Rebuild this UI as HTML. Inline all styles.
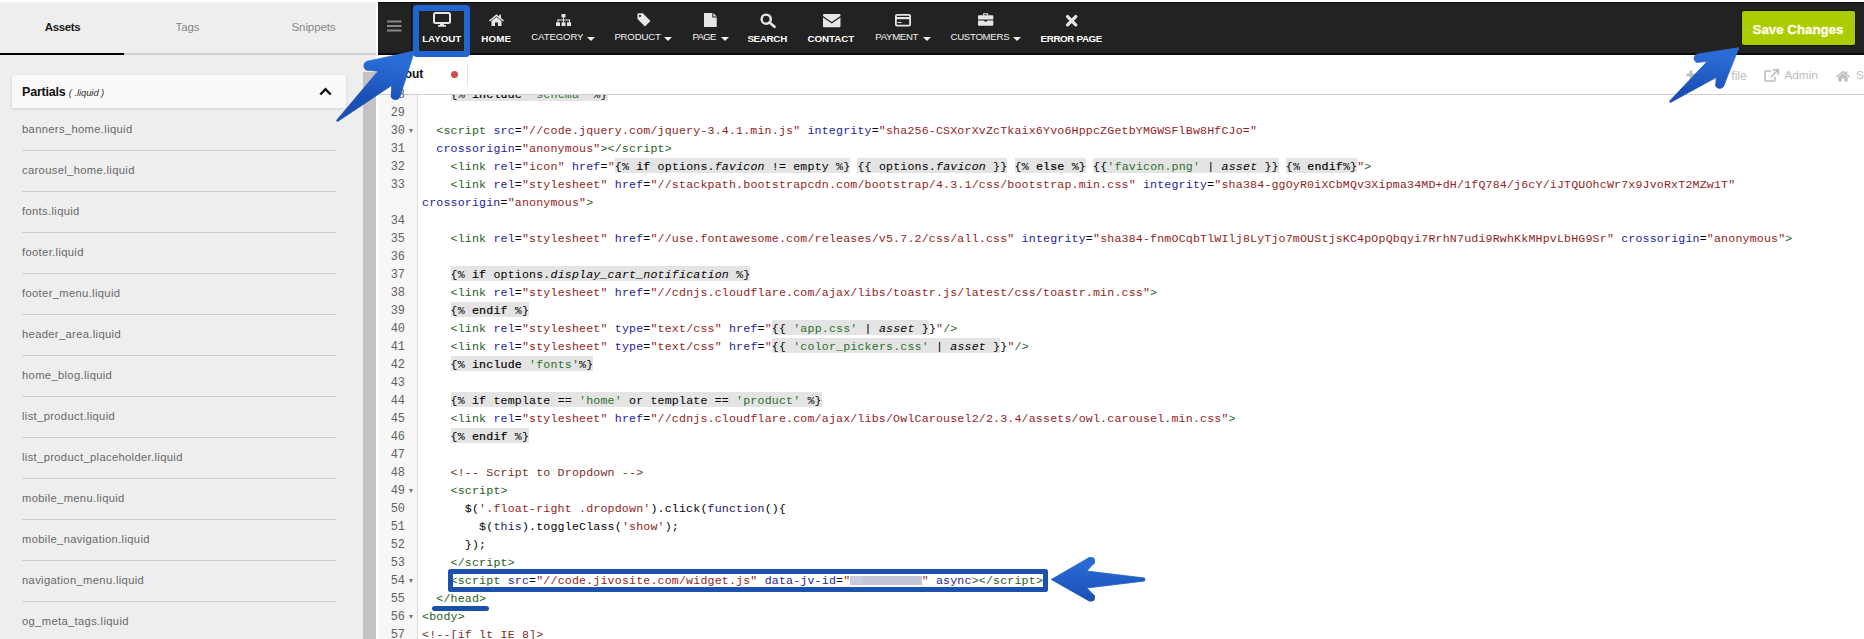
<!DOCTYPE html>
<html><head><meta charset="utf-8">
<style>
*{box-sizing:border-box;margin:0;padding:0}
html,body{width:1864px;height:639px;overflow:hidden;background:#fff;position:relative;font-family:"Liberation Sans",sans-serif}
.abs{position:absolute}
#side{position:absolute;left:0;top:2px;width:376px;height:637px;background:#eeeeee}
.tab{position:absolute;top:0;height:51px;width:125px;text-align:center;font-size:11.5px;line-height:51px;color:#888;letter-spacing:-0.1px}
.tab.on{color:#1a1a1a;font-weight:bold;letter-spacing:-0.35px}
#uline-b{position:absolute;left:0;top:51px;width:124px;height:2px;background:#000}
#uline-g{position:absolute;left:124px;top:51px;width:252px;height:2px;background:#d2d2d2}
#card{position:absolute;left:12px;top:73px;width:334px;height:33px;background:#f9f9f9;box-shadow:0 1px 3px rgba(0,0,0,.13)}
#card .t{position:absolute;left:10px;top:1px;line-height:33px;font-size:12.5px;font-weight:bold;color:#111;letter-spacing:-0.2px}
#card .t i{font-weight:normal;font-size:9.5px;color:#333;letter-spacing:-0.1px}
#card .chev{position:absolute;left:308px;top:13px;width:10px;height:10px}
.item{position:absolute;left:22px;font-size:11.8px;color:#707070;height:41px;width:314px}
.item span{position:absolute;left:0;top:0}
.sep{position:absolute;left:22px;width:314px;height:1px;background:#cdcdcd}
#sb{position:absolute;left:363px;top:70px;width:13px;height:569px;background:#c3c3c3}

#nav{position:absolute;left:378px;top:2px;width:1486px;height:53px;background:#222;border-top:1.5px solid #0b0b0b;border-bottom:2px solid #0b0b0b}
.ni{position:absolute;color:#fff;white-space:nowrap}
.nb{font-weight:bold;font-size:9.6px;letter-spacing:-0.1px}
.nr{font-weight:normal;font-size:9.4px;color:#f2f2f2;letter-spacing:-0.15px}
.caret{display:inline-block;width:0;height:0;border-left:4px solid transparent;border-right:4px solid transparent;border-top:4px solid #f0f0f0;margin-left:3px;vertical-align:1px}
#save{position:absolute;left:1362.5px;top:6.8px;width:115px;height:36.5px;background:#abcc00;border:1px solid #151515;border-radius:3px;color:#fffbe6;font-weight:bold;font-size:13.3px;text-align:center;line-height:38px;letter-spacing:0px;-webkit-text-stroke:0.35px #fffbe6}

#tabbar{position:absolute;left:376px;top:55px;width:1488px;height:40px;background:#fff;border-bottom:1px solid #cfcfcf}
#gutter{position:absolute;left:377.5px;top:95px;width:40.5px;height:544px;background:#f7f7f7;border-right:1px solid #dddddd}
#code{position:absolute;left:376px;top:95px;width:1488px;height:544px;overflow:hidden}
.gn{position:absolute;left:-1.5px;width:29px;text-align:right;font-family:"Liberation Mono",monospace;font-size:11.9px;line-height:18px;color:#626262;height:18px}
.fold{position:absolute;left:32.5px;top:6.8px;width:0;height:0;border-left:2.8px solid transparent;border-right:2.8px solid transparent;border-top:4px solid #777}
.ln{position:absolute;left:46px;white-space:pre;font-family:"Liberation Mono",monospace;font-size:11.6px;letter-spacing:0.18px;line-height:18px;color:#000;height:18px}
.t{color:#1d5e1d}
.a{color:#22229a}
.s{color:#931d1d}
.c{color:#7a2e1e}
.g{color:#2d6f2d}
.k{color:#1a1a66}
.b{-webkit-text-stroke:0.2px #000}
.i{font-style:italic}
.lq{background:#e4e4e4;padding:2px 0 0}
.r{color:transparent;display:inline-block;height:9px;line-height:9px;vertical-align:0.5px;background:linear-gradient(90deg,#c9ccdc 0,#c9ccdc 12px,#c3c5d8 12px)}
svg{position:absolute;overflow:visible}
</style></head><body>
<div id="side">
  <div class="tab on" style="left:0">Assets</div>
  <div class="tab" style="left:125px">Tags</div>
  <div class="tab" style="left:251px">Snippets</div>
  <div id="uline-b"></div><div id="uline-g"></div>
  <div id="card"><div class="t">Partials <i>( .liquid )</i></div>
    <svg class="chev" viewBox="0 0 13 9" style="left:307px;top:11.5px;width:13px;height:9px"><path d="M1.3 7.5 L6.5 2.2 L11.7 7.5" fill="none" stroke="#111" stroke-width="2.4"/></svg>
  </div>
  <div class="abs" style="left:22px;top:122.32px;font-size:11.2px;line-height:1;letter-spacing:0.35px;color:#686868;white-space:nowrap">banners_home.liquid</div>
<div class="sep" style="top:148px"></div>
<div class="abs" style="left:22px;top:163.32px;font-size:11.2px;line-height:1;letter-spacing:0.35px;color:#686868;white-space:nowrap">carousel_home.liquid</div>
<div class="sep" style="top:189px"></div>
<div class="abs" style="left:22px;top:204.32px;font-size:11.2px;line-height:1;letter-spacing:0.35px;color:#686868;white-space:nowrap">fonts.liquid</div>
<div class="sep" style="top:230px"></div>
<div class="abs" style="left:22px;top:245.32px;font-size:11.2px;line-height:1;letter-spacing:0.35px;color:#686868;white-space:nowrap">footer.liquid</div>
<div class="sep" style="top:271px"></div>
<div class="abs" style="left:22px;top:286.32px;font-size:11.2px;line-height:1;letter-spacing:0.35px;color:#686868;white-space:nowrap">footer_menu.liquid</div>
<div class="sep" style="top:312px"></div>
<div class="abs" style="left:22px;top:327.32px;font-size:11.2px;line-height:1;letter-spacing:0.35px;color:#686868;white-space:nowrap">header_area.liquid</div>
<div class="sep" style="top:353px"></div>
<div class="abs" style="left:22px;top:368.32px;font-size:11.2px;line-height:1;letter-spacing:0.35px;color:#686868;white-space:nowrap">home_blog.liquid</div>
<div class="sep" style="top:394px"></div>
<div class="abs" style="left:22px;top:409.32px;font-size:11.2px;line-height:1;letter-spacing:0.35px;color:#686868;white-space:nowrap">list_product.liquid</div>
<div class="sep" style="top:435px"></div>
<div class="abs" style="left:22px;top:450.32px;font-size:11.2px;line-height:1;letter-spacing:0.35px;color:#686868;white-space:nowrap">list_product_placeholder.liquid</div>
<div class="sep" style="top:476px"></div>
<div class="abs" style="left:22px;top:491.32px;font-size:11.2px;line-height:1;letter-spacing:0.35px;color:#686868;white-space:nowrap">mobile_menu.liquid</div>
<div class="sep" style="top:517px"></div>
<div class="abs" style="left:22px;top:532.32px;font-size:11.2px;line-height:1;letter-spacing:0.35px;color:#686868;white-space:nowrap">mobile_navigation.liquid</div>
<div class="sep" style="top:558px"></div>
<div class="abs" style="left:22px;top:573.32px;font-size:11.2px;line-height:1;letter-spacing:0.35px;color:#686868;white-space:nowrap">navigation_menu.liquid</div>
<div class="sep" style="top:599px"></div>
<div class="abs" style="left:22px;top:614.32px;font-size:11.2px;line-height:1;letter-spacing:0.35px;color:#686868;white-space:nowrap">og_meta_tags.liquid</div>
<div class="sep" style="top:640px"></div>
  <div id="sb"></div>
</div>

<div id="nav">
  
  <div id="save">Save Changes</div>
</div>

<div id="tabbar">
  <div class="abs" style="left:8px;top:0;line-height:38px;font-size:12px;font-weight:bold;color:#111">Layout</div>
  <div class="abs" style="left:75px;top:16px;width:7px;height:7px;border-radius:50%;background:#cf4f4f"></div>
  <div class="abs" style="left:91px;top:8px;width:1px;height:23px;background:#e3e3e3"></div>
  <div class="abs" style="left:1327.5px;top:14.67px;font-size:12.2px;line-height:1;color:#bdbdbd;white-space:nowrap">New file</div>
<svg style="left:1310.0px;top:15.0px;width:10px;height:10px" viewBox="0 0 10 10"><path d="M5 0.5 L5 9.5 M0.5 5 L9.5 5" stroke="#bdbdbd" stroke-width="2.6"/></svg>
<svg style="left:1388.0px;top:14.0px;width:15px;height:13px" viewBox="0 0 15 13"><path d="M7 2 L2 2 Q1 2 1 3 L1 11 Q1 12 2 12 L10 12 Q11 12 11 11 L11 7.5" fill="none" stroke="#bdbdbd" stroke-width="1.6"/><path d="M9 0.8 L14.2 0.8 L14.2 6 M14 1 L7 8" fill="none" stroke="#bdbdbd" stroke-width="1.7"/></svg>
<div class="abs" style="left:1408.4px;top:15.01px;font-size:11.8px;line-height:1;color:#bdbdbd;white-space:nowrap">Admin</div>
<svg style="left:1460.4px;top:14.5px;width:14px;height:12px" viewBox="0 0 15 12"><path d="M7.5 0.3 L0 6.5 L1 7.5 L7.5 2.2 L14 7.5 L15 6.5 L12 4 L12 0.8 L10.3 0.8 L10.3 2.6 Z" fill="#bdbdbd"/><path d="M2.5 7 L7.5 3 L12.5 7 L12.5 12 L9 12 L9 8.5 L6 8.5 L6 12 L2.5 12 Z" fill="#bdbdbd"/></svg>
<div class="abs" style="left:1480.0px;top:15.01px;font-size:11.8px;line-height:1;color:#bdbdbd;white-space:nowrap">Store</div>
</div>

<div id="gutter">
<div class="gn" style="top:-9.0px">28</div>
<div class="gn" style="top:9.0px">29</div>
<div class="gn" style="top:27.0px">30<i class="fold"></i></div>
<div class="gn" style="top:45.0px">31</div>
<div class="gn" style="top:63.0px">32</div>
<div class="gn" style="top:81.0px">33</div>
<div class="gn" style="top:117.0px">34</div>
<div class="gn" style="top:135.0px">35</div>
<div class="gn" style="top:153.0px">36</div>
<div class="gn" style="top:171.0px">37</div>
<div class="gn" style="top:189.0px">38</div>
<div class="gn" style="top:207.0px">39</div>
<div class="gn" style="top:225.0px">40</div>
<div class="gn" style="top:243.0px">41</div>
<div class="gn" style="top:261.0px">42</div>
<div class="gn" style="top:279.0px">43</div>
<div class="gn" style="top:297.0px">44</div>
<div class="gn" style="top:315.0px">45</div>
<div class="gn" style="top:333.0px">46</div>
<div class="gn" style="top:351.0px">47</div>
<div class="gn" style="top:369.0px">48</div>
<div class="gn" style="top:387.0px">49<i class="fold"></i></div>
<div class="gn" style="top:405.0px">50</div>
<div class="gn" style="top:423.0px">51</div>
<div class="gn" style="top:441.0px">52</div>
<div class="gn" style="top:459.0px">53</div>
<div class="gn" style="top:477.0px">54<i class="fold"></i></div>
<div class="gn" style="top:495.0px">55</div>
<div class="gn" style="top:513.0px">56<i class="fold"></i></div>
<div class="gn" style="top:531.0px">57</div>
</div>
<div id="code">
<div class="ln" style="top:-9.0px">    <span class="lq">{% <span class="b">include</span> <span class="g">&#x27;schema&#x27;</span> %}</span></div>
<div class="ln" style="top:9.0px"></div>
<div class="ln" style="top:27.0px">  <span class="t">&lt;script</span> <span class="a">src</span>=<span class="s">&quot;//code.jquery.com/jquery-3.4.1.min.js&quot;</span> <span class="a">integrity</span>=<span class="s">&quot;sha256-CSXorXvZcTkaix6Yvo6HppcZGetbYMGWSFlBw8HfCJo=&quot;</span></div>
<div class="ln" style="top:45.0px">  <span class="a">crossorigin</span>=<span class="s">&quot;anonymous&quot;</span><span class="t">&gt;&lt;/script&gt;</span></div>
<div class="ln" style="top:63.0px">    <span class="t">&lt;link</span> <span class="a">rel</span>=<span class="s">&quot;icon&quot;</span> <span class="a">href</span>=<span class="s">&quot;</span><span class="lq">{% <span class="b">if</span> options.<span class="i">favicon</span> != empty %}</span> <span class="lq">{{ options.<span class="i">favicon</span> }}</span> <span class="lq">{% <span class="b">else</span> %}</span> <span class="lq">{{<span class="g">&#x27;favicon.png&#x27;</span> | <span class="i">asset</span> }}</span> <span class="lq">{% <span class="b">endif</span>%}</span><span class="s">&quot;</span><span class="t">&gt;</span></div>
<div class="ln" style="top:81.0px">    <span class="t">&lt;link</span> <span class="a">rel</span>=<span class="s">&quot;stylesheet&quot;</span> <span class="a">href</span>=<span class="s">&quot;//stackpath.bootstrapcdn.com/bootstrap/4.3.1/css/bootstrap.min.css&quot;</span> <span class="a">integrity</span>=<span class="s">&quot;sha384-ggOyR0iXCbMQv3Xipma34MD+dH/1fQ784/j6cY/iJTQUOhcWr7x9JvoRxT2MZw1T&quot;</span></div>
<div class="ln" style="top:99.0px"><span class="a">crossorigin</span>=<span class="s">&quot;anonymous&quot;</span><span class="t">&gt;</span></div>
<div class="ln" style="top:117.0px"></div>
<div class="ln" style="top:135.0px">    <span class="t">&lt;link</span> <span class="a">rel</span>=<span class="s">&quot;stylesheet&quot;</span> <span class="a">href</span>=<span class="s">&quot;//use.fontawesome.com/releases/v5.7.2/css/all.css&quot;</span> <span class="a">integrity</span>=<span class="s">&quot;sha384-fnmOCqbTlWIlj8LyTjo7mOUStjsKC4pOpQbqyi7RrhN7udi9RwhKkMHpvLbHG9Sr&quot;</span> <span class="a">crossorigin</span>=<span class="s">&quot;anonymous&quot;</span><span class="t">&gt;</span></div>
<div class="ln" style="top:153.0px"></div>
<div class="ln" style="top:171.0px">    <span class="lq">{% <span class="b">if</span> options.<span class="i">display_cart_notification</span> %}</span></div>
<div class="ln" style="top:189.0px">    <span class="t">&lt;link</span> <span class="a">rel</span>=<span class="s">&quot;stylesheet&quot;</span> <span class="a">href</span>=<span class="s">&quot;//cdnjs.cloudflare.com/ajax/libs/toastr.js/latest/css/toastr.min.css&quot;</span><span class="t">&gt;</span></div>
<div class="ln" style="top:207.0px">    <span class="lq">{% <span class="b">endif</span> %}</span></div>
<div class="ln" style="top:225.0px">    <span class="t">&lt;link</span> <span class="a">rel</span>=<span class="s">&quot;stylesheet&quot;</span> <span class="a">type</span>=<span class="s">&quot;text/css&quot;</span> <span class="a">href</span>=<span class="s">&quot;</span><span class="lq">{{ <span class="g">&#x27;app.css&#x27;</span> | <span class="i">asset</span> }</span>}<span class="s">&quot;</span><span class="t">/&gt;</span></div>
<div class="ln" style="top:243.0px">    <span class="t">&lt;link</span> <span class="a">rel</span>=<span class="s">&quot;stylesheet&quot;</span> <span class="a">type</span>=<span class="s">&quot;text/css&quot;</span> <span class="a">href</span>=<span class="s">&quot;</span><span class="lq">{{ <span class="g">&#x27;color_pickers.css&#x27;</span> | <span class="i">asset</span> }</span>}<span class="s">&quot;</span><span class="t">/&gt;</span></div>
<div class="ln" style="top:261.0px">    <span class="lq">{% <span class="b">include</span> <span class="g">&#x27;fonts&#x27;</span>%}</span></div>
<div class="ln" style="top:279.0px"></div>
<div class="ln" style="top:297.0px">    <span class="lq">{% <span class="b">if</span> template == <span class="g">&#x27;home&#x27;</span> or template == <span class="g">&#x27;product&#x27;</span> %}</span></div>
<div class="ln" style="top:315.0px">    <span class="t">&lt;link</span> <span class="a">rel</span>=<span class="s">&quot;stylesheet&quot;</span> <span class="a">href</span>=<span class="s">&quot;//cdnjs.cloudflare.com/ajax/libs/OwlCarousel2/2.3.4/assets/owl.carousel.min.css&quot;</span><span class="t">&gt;</span></div>
<div class="ln" style="top:333.0px">    <span class="lq">{% <span class="b">endif</span> %}</span></div>
<div class="ln" style="top:351.0px"></div>
<div class="ln" style="top:369.0px">    <span class="c">&lt;!-- Script to Dropdown --&gt;</span></div>
<div class="ln" style="top:387.0px">    <span class="t">&lt;script&gt;</span></div>
<div class="ln" style="top:405.0px">      $(<span class="s">&#x27;.float-right .dropdown&#x27;</span>).click(<span class="k">function</span>(){</div>
<div class="ln" style="top:423.0px">        $(<span class="k">this</span>).toggleClass(<span class="s">&#x27;show&#x27;</span>);</div>
<div class="ln" style="top:441.0px">      });</div>
<div class="ln" style="top:459.0px">    <span class="t">&lt;/script&gt;</span></div>
<div class="ln" style="top:477.0px">    <span class="t">&lt;script</span> <span class="a">src</span>=<span class="s">&quot;//code.jivosite.com/widget.js&quot;</span> <span class="a">data-jv-id</span>=<span class="s">&quot;</span><span class="r">XXXXXXXXXX</span><span class="s">&quot;</span> <span class="a">async</span><span class="t">&gt;&lt;/script&gt;</span></div>
<div class="ln" style="top:495.0px">  <span class="t">&lt;/head&gt;</span></div>
<div class="ln" style="top:513.0px"><span class="t">&lt;body&gt;</span></div>
<div class="ln" style="top:531.0px"><span class="c">&lt;!--[if lt IE 8]&gt;</span></div>
</div>

<svg style="left:387px;top:20px;width:15px;height:12px" viewBox="0 0 15 12"><rect x="0" y="0.5" width="14.5" height="2" fill="#8a8a8a"/><rect x="0" y="5" width="14.5" height="2" fill="#8a8a8a"/><rect x="0" y="9.5" width="14.5" height="2" fill="#8a8a8a"/></svg>
<div class="abs" style="left:411px;top:3px;width:1px;height:50px;background:#111"></div>
<svg style="left:433px;top:11.7px;width:18px;height:15px" viewBox="0 0 18 15"><rect x="1" y="1" width="16" height="10" rx="1.5" fill="none" stroke="#e6e6e6" stroke-width="2"/><rect x="7" y="11" width="4" height="2.5" fill="#e6e6e6"/><rect x="5" y="13" width="8" height="1.8" rx="0.5" fill="#e6e6e6"/></svg>
<svg style="left:488.8px;top:14px;width:15px;height:12px" viewBox="0 0 15 12"><path d="M7.5 0.3 L0 6.5 L1 7.5 L7.5 2.2 L14 7.5 L15 6.5 L12 4 L12 0.8 L10.3 0.8 L10.3 2.6 Z" fill="#e6e6e6"/><path d="M2.5 7 L7.5 3 L12.5 7 L12.5 12 L9 12 L9 8.5 L6 8.5 L6 12 L2.5 12 Z" fill="#e6e6e6"/></svg>
<svg style="left:555.7px;top:14px;width:15px;height:12px" viewBox="0 0 15 12"><rect x="5.5" y="0" width="4" height="3.5" fill="#e6e6e6"/><rect x="7" y="3.5" width="1" height="2.5" fill="#e6e6e6"/><rect x="1.5" y="5.5" width="12" height="1" fill="#e6e6e6"/><rect x="1.5" y="5.5" width="1" height="3" fill="#e6e6e6"/><rect x="13" y="5.5" width="1" height="3" fill="#e6e6e6"/><rect x="7" y="5.5" width="1" height="3" fill="#e6e6e6"/><rect x="0" y="8.3" width="4" height="3.7" fill="#e6e6e6"/><rect x="5.5" y="8.3" width="4" height="3.7" fill="#e6e6e6"/><rect x="11" y="8.3" width="4" height="3.7" fill="#e6e6e6"/></svg>
<svg style="left:636.8px;top:13.1px;width:13.5px;height:13.5px" viewBox="0 0 13.5 13.5"><path d="M0.5 1.5 Q0.5 0.3 1.7 0.3 L5.8 0.3 L13 7.5 Q13.4 8 13 8.5 L8.5 13 Q8 13.4 7.5 13 L0.5 6 Z" fill="#e6e6e6"/><circle cx="3" cy="2.9" r="1.1" fill="#222"/></svg>
<svg style="left:703.9px;top:13px;width:13px;height:14px" viewBox="0 0 13 14"><path d="M0 0 L8.3 0 L8.3 4.5 L12.7 4.5 L12.7 14 L0 14 Z" fill="#e6e6e6"/><path d="M9.3 0 L12.7 3.5 L9.3 3.5 Z" fill="#e6e6e6"/></svg>
<svg style="left:759.7px;top:13px;width:16px;height:15px" viewBox="0 0 16 15"><circle cx="6.2" cy="6.2" r="4.6" fill="none" stroke="#e6e6e6" stroke-width="2.4"/><path d="M9.6 9.6 L14.5 13.8" stroke="#e6e6e6" stroke-width="2.6" stroke-linecap="round"/></svg>
<svg style="left:822.8px;top:14px;width:17.5px;height:13.2px" viewBox="0 0 17.5 13.2"><path d="M0 1 Q0 0 1 0 L16.5 0 Q17.5 0 17.5 1 L17.5 2 L8.75 8 L0 2 Z" fill="#e6e6e6"/><path d="M0 3.6 L8.75 9.6 L17.5 3.6 L17.5 12.2 Q17.5 13.2 16.5 13.2 L1 13.2 Q0 13.2 0 12.2 Z" fill="#e6e6e6"/></svg>
<svg style="left:894.9px;top:13.6px;width:16px;height:12.5px" viewBox="0 0 16 12.5"><rect x="0.9" y="0.9" width="14.2" height="10.7" rx="1" fill="none" stroke="#e6e6e6" stroke-width="1.8"/><rect x="1" y="3" width="14" height="2.2" fill="#e6e6e6"/><rect x="2.5" y="8" width="4" height="1" fill="#e6e6e6"/></svg>
<svg style="left:977.7px;top:12.7px;width:15.3px;height:12.7px" viewBox="0 0 15.3 12.7"><path d="M5 2.2 L5 1 Q5 0.2 5.8 0.2 L9.5 0.2 Q10.3 0.2 10.3 1 L10.3 2.2 L9 2.2 L9 1.3 L6.3 1.3 L6.3 2.2 Z" fill="#e6e6e6"/><path d="M0 3.2 Q0 2.2 1 2.2 L14.3 2.2 Q15.3 2.2 15.3 3.2 L15.3 6.5 L0 6.5 Z" fill="#e6e6e6"/><path d="M0 7.4 L6.2 7.4 L6.2 8.5 L9.1 8.5 L9.1 7.4 L15.3 7.4 L15.3 11.7 Q15.3 12.7 14.3 12.7 L1 12.7 Q0 12.7 0 11.7 Z" fill="#e6e6e6"/></svg>
<svg style="left:1066px;top:14.9px;width:11.4px;height:11.4px" viewBox="0 0 11.4 11.4"><path d="M1.6 1.6 L9.8 9.8 M9.8 1.6 L1.6 9.8" stroke="#e6e6e6" stroke-width="3.3" stroke-linecap="round"/></svg>
<div class="ni nb" style="left:422.2px;top:34.20px;font-size:9.8px;line-height:1;letter-spacing:-0.050px">LAYOUT</div>
<div class="ni nb" style="left:481.3px;top:34.20px;font-size:9.8px;line-height:1;letter-spacing:0.100px">HOME</div>
<div class="ni nr" style="left:531.3px;top:32.47px;font-size:9.6px;line-height:1;letter-spacing:-0.113px">CATEGORY</div>
<svg style="left:587.4px;top:36.8px;width:8px;height:4px" viewBox="0 0 8 4"><path d="M0 0 L8 0 L4 4 Z" fill="#f0f0f0"/></svg>
<div class="ni nr" style="left:614.4px;top:32.47px;font-size:9.6px;line-height:1;letter-spacing:-0.177px">PRODUCT</div>
<svg style="left:664.4px;top:36.8px;width:8px;height:4px" viewBox="0 0 8 4"><path d="M0 0 L8 0 L4 4 Z" fill="#f0f0f0"/></svg>
<div class="ni nr" style="left:692.4px;top:32.47px;font-size:9.6px;line-height:1;letter-spacing:-0.620px">PAGE</div>
<svg style="left:720.5px;top:36.8px;width:8px;height:4px" viewBox="0 0 8 4"><path d="M0 0 L8 0 L4 4 Z" fill="#f0f0f0"/></svg>
<div class="ni nb" style="left:747.4px;top:34.20px;font-size:9.8px;line-height:1;letter-spacing:-0.310px">SEARCH</div>
<div class="ni nb" style="left:807.4px;top:34.20px;font-size:9.8px;line-height:1;letter-spacing:-0.070px">CONTACT</div>
<div class="ni nr" style="left:875.3px;top:32.47px;font-size:9.6px;line-height:1;letter-spacing:-0.300px">PAYMENT</div>
<svg style="left:922.5px;top:36.8px;width:8px;height:4px" viewBox="0 0 8 4"><path d="M0 0 L8 0 L4 4 Z" fill="#f0f0f0"/></svg>
<div class="ni nr" style="left:950.5px;top:32.47px;font-size:9.6px;line-height:1;letter-spacing:-0.258px">CUSTOMERS</div>
<svg style="left:1013.2px;top:36.8px;width:8px;height:4px" viewBox="0 0 8 4"><path d="M0 0 L8 0 L4 4 Z" fill="#f0f0f0"/></svg>
<div class="ni nb" style="left:1040.5px;top:34.20px;font-size:9.8px;line-height:1;letter-spacing:-0.360px">ERROR PAGE</div>
<div class="abs" style="left:413.3px;top:4.7px;width:56.7px;height:52.8px;border:6px solid #2166cc;border-bottom-width:6.5px;border-radius:4px"></div>
<div class="abs" style="left:448px;top:569px;width:600px;height:22.5px;border:5px solid #1c52ac;border-radius:2.5px"></div>
<div class="abs" style="left:432px;top:606px;width:57px;height:4.7px;background:#1b50a8;border-radius:2.5px"></div>
<svg style="left:0;top:0;width:1864px;height:639px" viewBox="0 0 1864 639"><defs><linearGradient id="g1" gradientUnits="userSpaceOnUse" x1="380" y1="60" x2="372" y2="98"><stop offset="0" stop-color="#2a6cd6"/><stop offset="1" stop-color="#1a50b6"/></linearGradient></defs><path d="M414.50 51.00 L366.60 61.42 L365.77 69.82 L377.90 71.30 L336.47 120.40 L337.53 121.60 L391.70 85.40 L391.19 97.12 L399.73 97.31 Z" fill="url(#g1)" stroke="url(#g1)" stroke-width="0.8" stroke-linejoin="round"/><circle cx="368.00" cy="65.80" r="4.60" fill="url(#g1)"/><circle cx="395.50" cy="95.50" r="4.60" fill="url(#g1)"/></svg>
<svg style="left:0;top:0;width:1864px;height:639px" viewBox="0 0 1864 639"><defs><linearGradient id="g2" gradientUnits="userSpaceOnUse" x1="1705" y1="55" x2="1700" y2="92"><stop offset="0" stop-color="#2a6cd6"/><stop offset="1" stop-color="#1a50b6"/></linearGradient></defs><path d="M1738.90 47.70 L1696.92 54.14 L1696.53 62.34 L1707.10 61.60 L1669.41 101.27 L1670.39 102.53 L1716.40 77.30 L1715.80 86.21 L1723.51 86.39 Z" fill="url(#g2)" stroke="url(#g2)" stroke-width="0.8" stroke-linejoin="round"/><circle cx="1698.00" cy="58.30" r="4.30" fill="url(#g2)"/><circle cx="1719.70" cy="84.40" r="4.30" fill="url(#g2)"/></svg>
<svg style="left:0;top:0;width:1864px;height:639px" viewBox="0 0 1864 639"><defs><linearGradient id="g3" gradientUnits="userSpaceOnUse" x1="1090" y1="560" x2="1090" y2="600"><stop offset="0" stop-color="#2a6cd6"/><stop offset="1" stop-color="#1a50b6"/></linearGradient></defs><path d="M1051.30 579.50 L1089.45 557.37 L1094.69 562.43 L1086.80 571.00 L1144.70 578.00 L1144.70 581.00 L1086.80 588.00 L1094.66 596.01 L1089.49 601.15 Z" fill="url(#g3)" stroke="url(#g3)" stroke-width="0.8" stroke-linejoin="round"/><circle cx="1091.10" cy="560.90" r="3.90" fill="url(#g3)"/><circle cx="1091.10" cy="597.60" r="3.90" fill="url(#g3)"/></svg>
</body></html>
